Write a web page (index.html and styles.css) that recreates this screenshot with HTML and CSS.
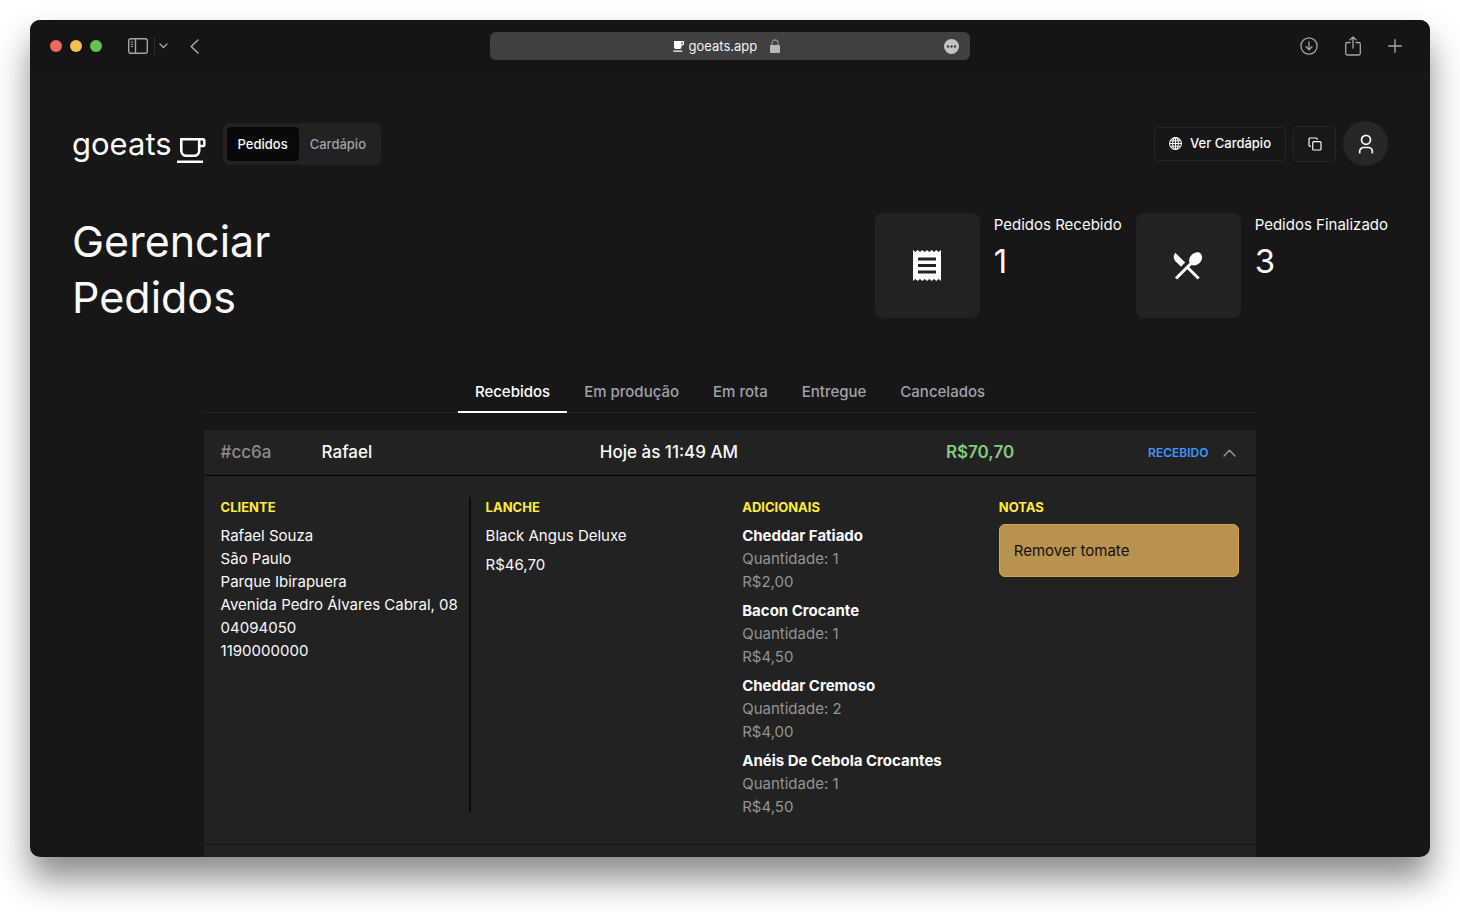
FILE: index.html
```
<!DOCTYPE html>
<html lang="pt-BR">
<head>
  <meta charset="UTF-8" />
  <meta name="viewport" content="width=device-width, initial-scale=1" />
  <title>goeats</title>
  <link rel="stylesheet" href="styles.css">
</head>
<body>
  <div class="window">
    <div class="toolbar">
      <div class="toolbar-left">
        <div class="lights">
          <span class="light red"></span>
          <span class="light yellow"></span>
          <span class="light green"></span>
        </div>
        <button class="tool sidebar-btn" aria-label="Barra lateral">
          <svg width="20" height="16" viewBox="0 0 20 16" fill="none" stroke="currentColor" stroke-width="1.4">
            <rect x="0.7" y="0.7" width="18.6" height="14.6" rx="2.2"/>
            <path d="M7.5 1v14"/>
            <path d="M2.8 4h2.4M2.8 6.3h2.4M2.8 8.6h2.4" stroke-width="1"/>
          </svg>
        </button>
        <span class="separator"></span>
        <button class="tool" aria-label="Grupos de abas">
          <svg width="9" height="6" viewBox="0 0 9 6" fill="none" stroke="currentColor" stroke-width="1.4" stroke-linecap="round" stroke-linejoin="round"><path d="M1 1l3.5 3.5L8 1"/></svg>
        </button>
        <button class="tool back-btn" aria-label="Voltar">
          <svg width="9" height="15" viewBox="0 0 9 15" fill="none" stroke="currentColor" stroke-width="1.6" stroke-linecap="round" stroke-linejoin="round"><path d="M8 1L1.2 7.5 8 14"/></svg>
        </button>
      </div>

      <div class="address">
        <div class="address-main">
          <svg width="11" height="11" viewBox="0 0 11 11" fill="#fff"><path fill-rule="evenodd" d="M1 0h9a1 1 0 0 1 1 1v2a1.4 1.4 0 0 1-1.4 1.4H8.5V6a2 2 0 0 1-2 2H3a2 2 0 0 1-2-2zM8.5 1.2v2h1.3v-2z"/><path d="M0.3 9.6h9v1.2h-9z"/></svg>
          <input class="url" type="text" value="goeats.app" aria-label="Endereço">
          <svg width="10" height="14" viewBox="0 0 10 14"><path d="M2 7V4a3 3 0 0 1 6 0v3" fill="none" stroke="#8f8f8f" stroke-width="1.3"/><rect y="6" width="10" height="8" rx="1" fill="#b8b8b8"/></svg>
        </div>
        <button class="tool" aria-label="Opções da página">
          <svg width="15" height="15" viewBox="0 0 15 15"><circle cx="7.5" cy="7.5" r="7.5" fill="#c2c2c2"/><g fill="#404040"><circle cx="4" cy="7.5" r="1.2"/><circle cx="7.5" cy="7.5" r="1.2"/><circle cx="11" cy="7.5" r="1.2"/></g></svg>
        </button>
      </div>

      <div class="toolbar-right">
        <button class="tool" aria-label="Downloads">
          <svg width="18" height="18" viewBox="0 0 18 18" fill="none" stroke="currentColor" stroke-width="1.3" stroke-linecap="round" stroke-linejoin="round"><circle cx="9" cy="9" r="8.1"/><path d="M9 4.8v7.8M6 9.8l3 3 3-3"/></svg>
        </button>
        <button class="tool" aria-label="Compartilhar">
          <svg width="16" height="20" viewBox="0 0 16 20" fill="none" stroke="currentColor" stroke-width="1.3" stroke-linecap="round" stroke-linejoin="round"><path d="M5 6.5H2.5A1.8 1.8 0 0 0 .7 8.3v8.900A1.800 1.800 0 0 0 2.500 19h11a1.800 1.800 0 0 0 1.800-1.800V8.300a1.800 1.800 0 0 0-1.800-1.800H11M8 12V1M5 3.800L8 1l3 2.800"/></svg>
        </button>
        <button class="tool" aria-label="Nova aba">
          <svg width="14" height="14" viewBox="0 0 14 14" fill="none" stroke="currentColor" stroke-width="1.4" stroke-linecap="round"><path d="M7 .7v12.6M.7 7h12.6"/></svg>
        </button>
      </div>
    </div>

    <div class="page">
      <header class="header">
        <a class="logo" href="#">
          <span>goeats</span>
          <svg width="29" height="27" viewBox="0 0 29 27" fill="none" stroke="#fff" stroke-width="2.6">
            <path d="M4.3 2.3h17.9v11.4a5 5 0 0 1-5 5H9.300a5 5 0 0 1-5-5z"/>
            <path d="M22.2 2.3h3.5a1.600 1.600 0 0 1 1.600 1.600v3.500a1.600 1.600 0 0 1-1.600 1.600h-3.500"/>
            <path d="M0 24.700h26"/>
          </svg>
        </a>
        <nav class="switch">
          <a class="switch-item active" href="#pedidos">Pedidos</a>
          <a class="switch-item" href="#cardapio">Cardápio</a>
        </nav>

        <div class="actions">
          <a class="menu-link" href="#ver">
            <svg width="13" height="13" viewBox="0 0 13 13" fill="none" stroke="currentColor" stroke-width="1.1"><circle cx="6.5" cy="6.5" r="5.9"/><ellipse cx="6.5" cy="6.5" rx="2.8" ry="5.9"/><path d="M6.5.6v11.800M.6 6.500h11.800M1.500 3.700h10M1.500 9.300h10"/></svg>
            Ver Cardápio
          </a>
          <button class="copy-btn" aria-label="Copiar link">
            <svg width="14" height="14" viewBox="0 0 14 14" fill="none" stroke="currentColor" stroke-width="1.2"><rect x="4.7" y="4.7" width="8.3" height="8.3" rx="1"/><path d="M2.800 9.300H2a1 1 0 0 1-1-1V2a1 1 0 0 1 1-1h6.300a1 1 0 0 1 1 1v.8"/></svg>
          </button>
          <button class="avatar" aria-label="Perfil">
            <svg width="16" height="20" viewBox="0 0 16 20" fill="none" stroke="currentColor" stroke-width="1.7" stroke-linecap="round"><circle cx="8" cy="5.8" r="4.5"/><path d="M1.700 18.700v-1.200a4 4 0 0 1 4-4h4.600a4 4 0 0 1 4 4v1.200"/></svg>
          </button>
        </div>
      </header>

      <section class="overview">
        <h1>Gerenciar<br>Pedidos</h1>
        <div class="stats">
          <div class="stat">
            <div class="stat-icon">
              <svg width="30" height="33" viewBox="0 0 30 33">
                <path fill="#fff" d="M1 1l2.300 2L5.700 1 8 3l2.300-2 2.400 2L15 1l2.300 2 2.400-2L22 3l2.300-2 2.400 2L29 1v31l-2.300-2-2.400 2-2.300-2-2.300 2-2.400-2-2.300 2-2.300-2-2.400 2L8 30l-2.300 2-2.400-2L1 32z"/>
                <path stroke="#222" stroke-width="3" d="M6 10h18M6 16.500h18M6 23h18"/>
              </svg>
            </div>
            <div class="stat-text">
              <div class="stat-label">Pedidos Recebido</div>
              <div class="stat-value">1</div>
            </div>
          </div>
          <div class="stat">
            <div class="stat-icon">
              <svg width="30" height="30" viewBox="0 0 30 30">
                <path fill="#fff" d="M8 15.800l4.200-4.200L2.400 1.800a6 6 0 0 0 0 8.400z"/>
                <path fill="#fff" d="M18.700 13.900c2.300 1.100 5.500.3 7.900-2 2.800-2.900 3.400-7 1.200-9.200s-6.300-1.600-9.200 1.200c-2.300 2.400-3.100 5.600-2 7.900L1.900 26.500 4 28.600l10.300-10.400 10.300 10.400 2.100-2.100-10.400-10.300z"/>
              </svg>
            </div>
            <div class="stat-text">
              <div class="stat-label">Pedidos Finalizado</div>
              <div class="stat-value">3</div>
            </div>
          </div>
        </div>
      </section>

      <main class="orders">
        <div class="tabs" role="tablist">
          <button class="tab active" role="tab" aria-selected="true">Recebidos</button>
          <button class="tab" role="tab">Em produção</button>
          <button class="tab" role="tab">Em rota</button>
          <button class="tab" role="tab">Entregue</button>
          <button class="tab" role="tab">Cancelados</button>
        </div>

        <article class="order">
          <button class="order-head" aria-expanded="true">
            <span class="order-id">#cc6a</span>
            <span>Rafael</span>
            <span>Hoje às 11:49 AM</span>
            <span class="order-total">R$70,70</span>
            <span class="order-status">RECEBIDO</span>
            <svg width="13" height="8" viewBox="0 0 13 8" fill="none" stroke="#9a9a9a" stroke-width="1.3" stroke-linecap="round" stroke-linejoin="round"><path d="M1 7l5.500-5.800L12 7"/></svg>
          </button>

          <div class="order-body">
            <section class="client">
              <h2>CLIENTE</h2>
              <p>Rafael Souza</p>
              <p>São Paulo</p>
              <p>Parque Ibirapuera</p>
              <p>Avenida Pedro Álvares Cabral, 08</p>
              <p>04094050</p>
              <p>1190000000</p>
            </section>
            <div class="details">
              <section>
                <h2>LANCHE</h2>
                <div class="entries">
                  <p>Black Angus Deluxe</p>
                  <p>R$46,70</p>
                </div>
              </section>
              <section>
                <h2>ADICIONAIS</h2>
                <ul class="entries">
                  <li><strong>Cheddar Fatiado</strong><p>Quantidade: 1</p><p>R$2,00</p></li>
                  <li><strong>Bacon Crocante</strong><p>Quantidade: 1</p><p>R$4,50</p></li>
                  <li><strong>Cheddar Cremoso</strong><p>Quantidade: 2</p><p>R$4,00</p></li>
                  <li><strong>Anéis De Cebola Crocantes</strong><p>Quantidade: 1</p><p>R$4,50</p></li>
                </ul>
              </section>
              <section>
                <h2>NOTAS</h2>
                <p class="note">Remover tomate</p>
              </section>
            </div>
          </div>
          <div class="order-footer"></div>
        </article>
      </main>
    </div>
  </div>
</body>
</html>
```
FILE: styles.css
```
* {
  box-sizing: border-box;
}

body {
  margin: 0;
  height: 100vh;
  padding: 20px 30px 55px;
  background: #fff;
  color: #fafafa;
  font-family: Inter, "Noto Sans", sans-serif;
  font-size: 15px;
  line-height: 23px;
}

h1, h2, p, ul {
  margin: 0;
  padding: 0;
}

a {
  color: inherit;
  text-decoration: none;
}

button {
  padding: 0;
  border: none;
  background: none;
  color: inherit;
  font: inherit;
  cursor: pointer;
}

svg {
  display: block;
  flex: none;
}

.window {
  height: 100%;
  overflow: hidden;
  border-radius: 10px;
  background: #171717;
  box-shadow: 0 22px 34px rgba(0, 0, 0, 0.46);
}

/* browser toolbar */
.toolbar {
  display: grid;
  grid-template-columns: 1fr minmax(0, 480px) 1fr;
  align-items: center;
  height: 52px;
  padding: 0 20px;
  background: #151515;
  color: #a6a6a6;
}

.toolbar-left,
.toolbar-right,
.lights {
  display: flex;
  align-items: center;
}

.toolbar-right {
  justify-content: flex-end;
  gap: 27px;
  padding-right: 8px;
}

.lights {
  gap: 8px;
}

.light {
  width: 12px;
  height: 12px;
  border-radius: 50%;
}

.red { background: #ed6a5e; }
.yellow { background: #f5bf4f; }
.green { background: #61c554; }

.sidebar-btn {
  margin-left: 26px;
}

.separator {
  width: 1px;
  height: 18px;
  margin: 0 4px 0 6px;
  background: #2c2c2c;
}

.back-btn {
  margin-left: 22px;
}

.address {
  display: flex;
  align-items: center;
  height: 28px;
  padding-right: 11px;
  border-radius: 6px;
  background: #404040;
}

.address-main {
  display: flex;
  flex: 1;
  align-items: center;
  justify-content: center;
  gap: 5px;
  padding-left: 18px;
}

.url {
  width: 76px;
  padding: 0;
  border: none;
  outline: none;
  background: none;
  color: #f2f2f2;
  font: 13px/20px Inter, "Noto Sans", sans-serif;
}

/* page header */
.page {
  padding: 49px 42px 0;
}

.header {
  display: flex;
  align-items: center;
}

.logo {
  display: flex;
  align-items: flex-end;
  gap: 5px;
  margin-right: 17px;
  font-size: 31px;
  line-height: 40px;
}

.switch {
  display: flex;
  padding: 4px;
  border-radius: 6px;
  background: #222;
  font-size: 13px;
  font-weight: 500;
  line-height: 20px;
}

.switch-item {
  padding: 7px 11px;
  border-radius: 4px;
  color: #a1a1aa;
}

.switch-item.active {
  background: #09090b;
  color: #fafafa;
}

.actions {
  display: flex;
  align-items: center;
  gap: 7px;
  margin-left: auto;
}

.menu-link {
  display: flex;
  align-items: center;
  gap: 8px;
  height: 34px;
  padding: 0 14px;
  border: 1px solid #262626;
  border-radius: 4px;
  font-size: 13px;
  font-weight: 500;
}

.copy-btn,
.avatar {
  display: flex;
  align-items: center;
  justify-content: center;
}

.copy-btn {
  width: 43px;
  height: 36px;
  border: 1px solid #27272a;
  border-radius: 5px;
  background: #18181a;
}

.avatar {
  width: 45px;
  height: 45px;
  border-radius: 50%;
  background: #27272a;
}

/* title and counters */
.overview {
  display: flex;
  justify-content: space-between;
  margin-top: 47px;
}

h1 {
  font-size: 43px;
  font-weight: 400;
  line-height: 56px;
}

.stats {
  display: flex;
  gap: 14px;
}

.stat {
  display: flex;
  gap: 14px;
}

.stat-icon {
  display: flex;
  align-items: center;
  justify-content: center;
  width: 105px;
  height: 105px;
  border-radius: 8px;
  background: #222;
}

.stat-value {
  margin-top: 5px;
  font-size: 33px;
  line-height: 40px;
}

/* orders */
.orders {
  width: 80%;
  margin: 46px auto 0;
}

.tabs {
  display: flex;
  justify-content: center;
  border-bottom: 1px solid #262626;
}

.tab {
  height: 42px;
  margin-bottom: -1px;
  padding: 0 17px;
  border-bottom: 2px solid transparent;
  color: #a1a1aa;
  font-weight: 500;
}

.tab.active {
  border-color: #fff;
  color: #fff;
}

.order {
  margin-top: 17px;
  background: #222;
}

.order-head {
  display: grid;
  grid-template-columns: 101px 278fr 346fr 202fr auto 13px;
  align-items: center;
  width: 100%;
  height: 46px;
  padding: 0 20px 0 17px;
  border-bottom: 1px solid #000;
  border-radius: 3px;
  font-size: 17px;
  font-weight: 500;
  text-align: left;
}

.order-id {
  color: #8c8c8c;
}

.order-total {
  color: #84cc7c;
  font-weight: 600;
}

.order-status {
  margin-right: 15px;
  color: #4096ff;
  font-size: 12px;
  font-weight: 600;
}

.order-body {
  display: flex;
  padding: 21px 17px 26px;
}

.client {
  flex: 0 0 250px;
  margin-bottom: 5px;
  border-right: 2px solid #0c0c0c;
}

.details {
  display: grid;
  grid-template-columns: repeat(3, 1fr);
  flex: 1;
  gap: 16px;
  padding-left: 15px;
}

h2 {
  margin-bottom: 7px;
  color: #ffeb3b;
  font-size: 13px;
  font-weight: 700;
  line-height: 20px;
}

.entries {
  display: flex;
  flex-direction: column;
  gap: 6px;
  list-style: none;
}

.entries li p {
  color: #949494;
}

.note {
  padding: 14px;
  border: 1px solid #d4a351;
  border-radius: 6px;
  background: #ba924f;
  color: #111;
}

.order-footer {
  height: 46px;
  border-top: 1px solid #161616;
}
```
